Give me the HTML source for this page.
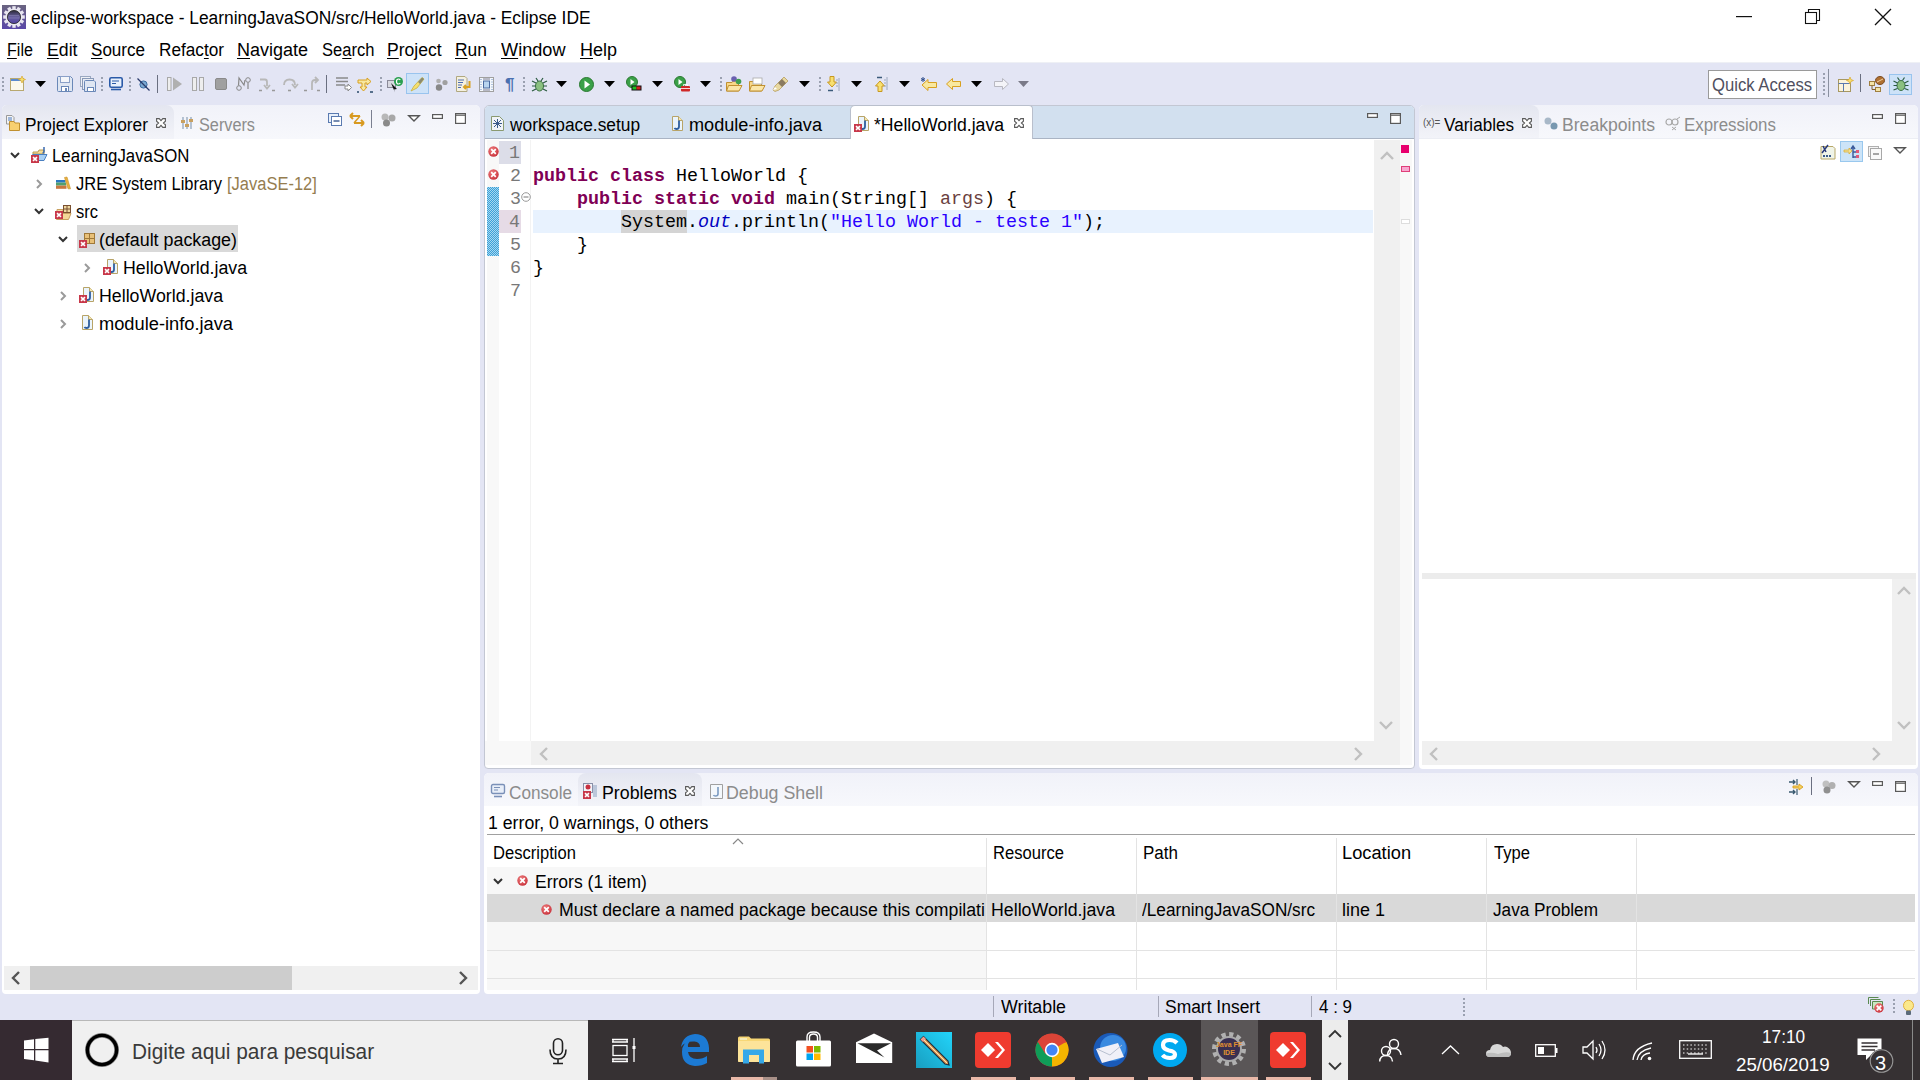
<!DOCTYPE html><html><head><meta charset="utf-8"><style>
*{margin:0;padding:0;box-sizing:border-box}
html,body{width:1920px;height:1080px;overflow:hidden}
body{position:relative;background:#e3e5f4;font-family:"Liberation Sans",sans-serif;color:#000}
.a{position:absolute}
.t{position:absolute;white-space:pre}
svg{position:absolute;overflow:visible}
</style></head><body>
<div class="a" style="left:0px;top:0px;width:1920px;height:62px;background:#fff"></div>
<div class="a" style="left:0px;top:62px;width:1920px;height:1px;background:#eef0f5"></div>
<div class="a" style="left:0px;top:63px;width:1920px;height:42px;background:#e3e5f4"></div>
<svg style="left:2px;top:5px" width="24" height="24" viewBox="0 0 24 24"><defs><linearGradient id="eb" x1="0" y1="0" x2="0" y2="1"><stop offset="0" stop-color="#6a6480"/><stop offset="1" stop-color="#5a48a8"/></linearGradient><linearGradient id="ec" x1="0" y1="0" x2="0" y2="1"><stop offset="0" stop-color="#2a2838"/><stop offset=".5" stop-color="#6a62a0"/><stop offset="1" stop-color="#5040a0"/></linearGradient></defs><rect width="24" height="24" fill="url(#eb)"/><g fill="#e8e6f0"><rect x="10.3" y="1.2" width="3.4" height="4" transform="rotate(0 12 12)"/><rect x="10.3" y="1.2" width="3.4" height="4" transform="rotate(30 12 12)"/><rect x="10.3" y="1.2" width="3.4" height="4" transform="rotate(60 12 12)"/><rect x="10.3" y="1.2" width="3.4" height="4" transform="rotate(90 12 12)"/><rect x="10.3" y="1.2" width="3.4" height="4" transform="rotate(120 12 12)"/><rect x="10.3" y="1.2" width="3.4" height="4" transform="rotate(150 12 12)"/><rect x="10.3" y="1.2" width="3.4" height="4" transform="rotate(180 12 12)"/><rect x="10.3" y="1.2" width="3.4" height="4" transform="rotate(210 12 12)"/><rect x="10.3" y="1.2" width="3.4" height="4" transform="rotate(240 12 12)"/><rect x="10.3" y="1.2" width="3.4" height="4" transform="rotate(270 12 12)"/><rect x="10.3" y="1.2" width="3.4" height="4" transform="rotate(300 12 12)"/><rect x="10.3" y="1.2" width="3.4" height="4" transform="rotate(330 12 12)"/></g><circle cx="12" cy="12" r="8.6" fill="#e8e6f0"/><circle cx="12" cy="12" r="6.6" fill="url(#ec)" stroke="#222" stroke-width=".8"/><path d="M7 10.5H17M6.5 13H17.5" stroke="#8a84b8" stroke-width=".8" opacity=".7"/></svg>
<div class="t" style="left:31.00px;top:6.76px;font-size:18.0px;line-height:22px;color:#000;font-family:'Liberation Sans',sans-serif;transform:scaleX(0.9649);transform-origin:0 0">eclipse-workspace - LearningJavaSON/src/HelloWorld.java - Eclipse IDE</div>
<svg style="left:1736px;top:16px" width="16" height="2"><rect width="16" height="1.2" fill="#111"/></svg>
<svg style="left:1805px;top:9px" width="16" height="16" viewBox="0 0 16 16"><path d="M3.5 3.5V0.5H14.5V11.5H11.5" fill="none" stroke="#111" stroke-width="1.1"/><rect x="0.5" y="3.5" width="11" height="11" fill="none" stroke="#111" stroke-width="1.1"/></svg>
<svg style="left:1874px;top:8px" width="18" height="18" viewBox="0 0 18 18"><path d="M1 1L17 17M17 1L1 17" stroke="#111" stroke-width="1.3"/></svg>
<div class="t" style="left:6.61px;top:38.76px;font-size:18.0px;line-height:22px;color:#000;font-family:'Liberation Sans',sans-serif;transform:scaleX(0.8931);transform-origin:0 0"><u style="text-underline-offset:2px">F</u>ile</div>
<div class="t" style="left:46.52px;top:38.76px;font-size:18.0px;line-height:22px;color:#000;font-family:'Liberation Sans',sans-serif;transform:scaleX(0.9828);transform-origin:0 0"><u style="text-underline-offset:2px">E</u>dit</div>
<div class="t" style="left:91.00px;top:38.76px;font-size:18.0px;line-height:22px;color:#000;font-family:'Liberation Sans',sans-serif;transform:scaleX(0.9470);transform-origin:0 0"><u style="text-underline-offset:2px">S</u>ource</div>
<div class="t" style="left:159.05px;top:38.76px;font-size:18.0px;line-height:22px;color:#000;font-family:'Liberation Sans',sans-serif;transform:scaleX(0.9548);transform-origin:0 0">Refac<u style="text-underline-offset:2px">t</u>or</div>
<div class="t" style="left:237.00px;top:38.76px;font-size:18.0px;line-height:22px;color:#000;font-family:'Liberation Sans',sans-serif;transform:scaleX(0.9996);transform-origin:0 0"><u style="text-underline-offset:2px">N</u>avigate</div>
<div class="t" style="left:322.00px;top:38.76px;font-size:18.0px;line-height:22px;color:#000;font-family:'Liberation Sans',sans-serif;transform:scaleX(0.9193);transform-origin:0 0">Se<u style="text-underline-offset:2px">a</u>rch</div>
<div class="t" style="left:387.02px;top:38.76px;font-size:18.0px;line-height:22px;color:#000;font-family:'Liberation Sans',sans-serif;transform:scaleX(0.9760);transform-origin:0 0"><u style="text-underline-offset:2px">P</u>roject</div>
<div class="t" style="left:455.03px;top:38.76px;font-size:18.0px;line-height:22px;color:#000;font-family:'Liberation Sans',sans-serif;transform:scaleX(0.9674);transform-origin:0 0"><u style="text-underline-offset:2px">R</u>un</div>
<div class="t" style="left:501.00px;top:38.76px;font-size:18.0px;line-height:22px;color:#000;font-family:'Liberation Sans',sans-serif;transform:scaleX(1.0074);transform-origin:0 0"><u style="text-underline-offset:2px">W</u>indow</div>
<div class="t" style="left:580.00px;top:38.76px;font-size:18.0px;line-height:22px;color:#000;font-family:'Liberation Sans',sans-serif;transform:scaleX(0.9998);transform-origin:0 0"><u style="text-underline-offset:2px">H</u>elp</div>
<div class="a" style="left:2px;top:105px;width:478px;height:889px;background:#fff;border-radius:5px 5px 4px 4px"></div>
<div class="a" style="left:2px;top:105px;width:478px;height:34px;background:linear-gradient(#f1f2f9,#f7f8fc);border-radius:5px 5px 0 0"></div>
<div class="a" style="left:2px;top:105px;width:172px;height:34px;background:linear-gradient(#e4e6f0,#f3f4f9);border-radius:5px 8px 0 0"></div>
<div class="t" style="left:25.04px;top:113.76px;font-size:18.0px;line-height:22px;color:#000;font-family:'Liberation Sans',sans-serif;transform:scaleX(0.9602);transform-origin:0 0">Project Explorer</div>
<div class="t" style="left:199.00px;top:113.76px;font-size:18.0px;line-height:22px;color:#8c8c8c;font-family:'Liberation Sans',sans-serif;transform:scaleX(0.9030);transform-origin:0 0">Servers</div>
<div class="a" style="left:484px;top:105px;width:931px;height:664px;background:#fff;border-radius:5px 5px 4px 4px;border:1px solid #c3c7d3"></div>
<div class="a" style="left:485px;top:106px;width:929px;height:33px;background:#d2e0ef;border-radius:4px 4px 0 0;border-bottom:1px solid #aab4c4"></div>
<div class="a" style="left:850px;top:105px;width:183px;height:34px;background:#fff;border:1px solid #b9bfcc;border-bottom:none;border-radius:5px 4px 0 0"></div>
<div class="t" style="left:509.96px;top:113.76px;font-size:18.0px;line-height:22px;color:#000;font-family:'Liberation Sans',sans-serif;transform:scaleX(0.9628);transform-origin:0 0">workspace.setup</div>
<div class="t" style="left:688.99px;top:113.76px;font-size:18.0px;line-height:22px;color:#000;font-family:'Liberation Sans',sans-serif;transform:scaleX(1.0071);transform-origin:0 0">module-info.java</div>
<div class="t" style="left:874.00px;top:113.76px;font-size:18.0px;line-height:22px;color:#000;font-family:'Liberation Sans',sans-serif;transform:scaleX(0.9797);transform-origin:0 0">*HelloWorld.java</div>
<div class="a" style="left:1419px;top:105px;width:499px;height:664px;background:#fff;border-radius:5px 5px 4px 4px"></div>
<div class="a" style="left:1419px;top:105px;width:499px;height:34px;background:linear-gradient(#f1f2f9,#f7f8fc);border-radius:5px 5px 0 0"></div>
<div class="a" style="left:1419px;top:105px;width:120px;height:34px;background:linear-gradient(#e4e6f0,#f3f4f9);border-radius:5px 8px 0 0"></div>
<div class="t" style="left:1444.00px;top:113.76px;font-size:18.0px;line-height:22px;color:#000;font-family:'Liberation Sans',sans-serif;transform:scaleX(0.9497);transform-origin:0 0">Variables</div>
<div class="t" style="left:1562.02px;top:113.76px;font-size:18.0px;line-height:22px;color:#8c8c8c;font-family:'Liberation Sans',sans-serif;transform:scaleX(0.9782);transform-origin:0 0">Breakpoints</div>
<div class="t" style="left:1684.06px;top:113.76px;font-size:18.0px;line-height:22px;color:#8c8c8c;font-family:'Liberation Sans',sans-serif;transform:scaleX(0.9377);transform-origin:0 0">Expressions</div>
<div class="a" style="left:484px;top:773px;width:1434px;height:221px;background:#fff;border-radius:5px 5px 4px 4px"></div>
<div class="a" style="left:484px;top:773px;width:1434px;height:33px;background:linear-gradient(#f1f2f9,#f7f8fc);border-radius:5px 5px 0 0"></div>
<div class="a" style="left:578px;top:773px;width:124px;height:33px;background:linear-gradient(#e4e6f0,#f3f4f9);border-radius:8px 8px 0 0"></div>
<div class="t" style="left:509.00px;top:781.76px;font-size:18.0px;line-height:22px;color:#8c8c8c;font-family:'Liberation Sans',sans-serif;transform:scaleX(0.9541);transform-origin:0 0">Console</div>
<div class="t" style="left:602.01px;top:781.76px;font-size:18.0px;line-height:22px;color:#000;font-family:'Liberation Sans',sans-serif;transform:scaleX(0.9863);transform-origin:0 0">Problems</div>
<div class="t" style="left:726.01px;top:781.76px;font-size:18.0px;line-height:22px;color:#8c8c8c;font-family:'Liberation Sans',sans-serif;transform:scaleX(0.9889);transform-origin:0 0">Debug Shell</div>
<div class="a" style="left:77px;top:225px;width:161px;height:27px;background:#d9d9d9"></div>
<div class="t" style="left:51.57px;top:144.76px;font-size:18.0px;line-height:22px;color:#000;font-family:'Liberation Sans',sans-serif;transform:scaleX(0.9339);transform-origin:0 0">LearningJavaSON</div>
<div class="t" style="left:76.00px;top:172.76px;font-size:18.0px;line-height:22px;color:#000;font-family:'Liberation Sans',sans-serif;transform:scaleX(0.9180);transform-origin:0 0">JRE System Library</div>
<div class="t" style="left:76.00px;top:200.76px;font-size:18.0px;line-height:22px;color:#000;font-family:'Liberation Sans',sans-serif;transform:scaleX(0.9169);transform-origin:0 0">src</div>
<div class="t" style="left:99.01px;top:228.76px;font-size:18.0px;line-height:22px;color:#000;font-family:'Liberation Sans',sans-serif;transform:scaleX(0.9920);transform-origin:0 0">(default package)</div>
<div class="t" style="left:123.01px;top:256.76px;font-size:18.0px;line-height:22px;color:#000;font-family:'Liberation Sans',sans-serif;transform:scaleX(0.9864);transform-origin:0 0">HelloWorld.java</div>
<div class="t" style="left:99.01px;top:284.76px;font-size:18.0px;line-height:22px;color:#000;font-family:'Liberation Sans',sans-serif;transform:scaleX(0.9864);transform-origin:0 0">HelloWorld.java</div>
<div class="t" style="left:98.99px;top:312.76px;font-size:18.0px;line-height:22px;color:#000;font-family:'Liberation Sans',sans-serif;transform:scaleX(1.0147);transform-origin:0 0">module-info.java</div>
<div class="t" style="left:227.08px;top:172.76px;font-size:18.0px;line-height:22px;color:#957d4f;font-family:'Liberation Sans',sans-serif;transform:scaleX(0.9162);transform-origin:0 0">[JavaSE-12]</div>
<div class="a" style="left:487px;top:140px;width:12px;height:601px;background:#f8f8f8"></div>
<div class="a" style="left:530px;top:140px;width:1px;height:601px;background:#f3f3f3"></div>
<div class="a" style="left:533px;top:210px;width:840px;height:23px;background:#e8f2fe"></div>
<div class="a" style="left:621px;top:210px;width:66px;height:23px;background:#d4d4d4"></div>
<div class="a" style="left:499px;top:141px;width:22px;height:23px;background:#dcdde8"></div>
<div class="a" style="left:499px;top:210px;width:22px;height:23px;background:#e6dbe6"></div>
<div class="t" style="left:509.00px;top:142.62px;font-size:18.33px;line-height:22px;color:#787878;font-family:'Liberation Mono',monospace">1</div>
<div class="t" style="left:510.00px;top:165.62px;font-size:18.33px;line-height:22px;color:#787878;font-family:'Liberation Mono',monospace">2</div>
<div class="t" style="left:510.00px;top:188.62px;font-size:18.33px;line-height:22px;color:#787878;font-family:'Liberation Mono',monospace">3</div>
<div class="t" style="left:509.00px;top:211.62px;font-size:18.33px;line-height:22px;color:#787878;font-family:'Liberation Mono',monospace">4</div>
<div class="t" style="left:510.00px;top:234.62px;font-size:18.33px;line-height:22px;color:#787878;font-family:'Liberation Mono',monospace">5</div>
<div class="t" style="left:510.00px;top:257.62px;font-size:18.33px;line-height:22px;color:#787878;font-family:'Liberation Mono',monospace">6</div>
<div class="t" style="left:510.00px;top:280.62px;font-size:18.33px;line-height:22px;color:#787878;font-family:'Liberation Mono',monospace">7</div>
<div class="t" style="left:533px;top:165.4px;font-family:'Liberation Mono',monospace;font-size:18.33px;line-height:23px"><span style="color:#7f0055;font-weight:bold">public</span> <span style="color:#7f0055;font-weight:bold">class</span> HelloWorld {</div>
<div class="t" style="left:533px;top:188.4px;font-family:'Liberation Mono',monospace;font-size:18.33px;line-height:23px">    <span style="color:#7f0055;font-weight:bold">public</span> <span style="color:#7f0055;font-weight:bold">static</span> <span style="color:#7f0055;font-weight:bold">void</span> main(String[] <span style="color:#6a3e3e">args</span>) {</div>
<div class="t" style="left:533px;top:211.4px;font-family:'Liberation Mono',monospace;font-size:18.33px;line-height:23px">        System.<span style="color:#0000c0;font-style:italic">out</span>.println(<span style="color:#2a00ff">"Hello World - teste 1"</span>);</div>
<div class="t" style="left:533px;top:234.4px;font-family:'Liberation Mono',monospace;font-size:18.33px;line-height:23px">    }</div>
<div class="t" style="left:533px;top:257.4px;font-family:'Liberation Mono',monospace;font-size:18.33px;line-height:23px">}</div>
<div class="a" style="left:1374px;top:140px;width:26px;height:625px;background:#f0f0f0"></div>
<div class="a" style="left:1400px;top:140px;width:12px;height:625px;background:#f8f8f8"></div>
<div class="a" style="left:531px;top:741px;width:843px;height:24px;background:#f0f0f0"></div>
<div class="a" style="left:485px;top:741px;width:46px;height:24px;background:#f8f8f8"></div>
<div class="t" style="left:487.62px;top:812.46px;font-size:18.0px;line-height:22px;color:#000;font-family:'Liberation Sans',sans-serif;transform:scaleX(0.9834);transform-origin:0 0">1 error, 0 warnings, 0 others</div>
<div class="a" style="left:487px;top:834px;width:1428px;height:1px;background:#a0a0a0"></div>
<div class="t" style="left:493.08px;top:841.76px;font-size:18.0px;line-height:22px;color:#000;font-family:'Liberation Sans',sans-serif;transform:scaleX(0.9202);transform-origin:0 0">Description</div>
<div class="t" style="left:992.78px;top:841.76px;font-size:18.0px;line-height:22px;color:#000;font-family:'Liberation Sans',sans-serif;transform:scaleX(0.9207);transform-origin:0 0">Resource</div>
<div class="t" style="left:1142.56px;top:841.76px;font-size:18.0px;line-height:22px;color:#000;font-family:'Liberation Sans',sans-serif;transform:scaleX(0.9424);transform-origin:0 0">Path</div>
<div class="t" style="left:1342.49px;top:841.76px;font-size:18.0px;line-height:22px;color:#000;font-family:'Liberation Sans',sans-serif;transform:scaleX(1.0145);transform-origin:0 0">Location</div>
<div class="t" style="left:1493.70px;top:841.76px;font-size:18.0px;line-height:22px;color:#000;font-family:'Liberation Sans',sans-serif;transform:scaleX(0.9228);transform-origin:0 0">Type</div>
<div class="a" style="left:487px;top:867px;width:499px;height:27px;background:#f7f7f7"></div>
<div class="a" style="left:487px;top:894px;width:1428px;height:28px;background:#d9d9d9"></div>
<div class="a" style="left:487px;top:922px;width:499px;height:68px;background:#f7f7f7"></div>
<div class="a" style="left:487px;top:950px;width:1428px;height:1px;background:#e3e3e3"></div>
<div class="a" style="left:487px;top:978px;width:1428px;height:1px;background:#e3e3e3"></div>
<div class="a" style="left:986px;top:838px;width:1px;height:152px;background:#e3e3e3"></div>
<div class="a" style="left:1136px;top:838px;width:1px;height:152px;background:#e3e3e3"></div>
<div class="a" style="left:1336px;top:838px;width:1px;height:152px;background:#e3e3e3"></div>
<div class="a" style="left:1486px;top:838px;width:1px;height:152px;background:#e3e3e3"></div>
<div class="a" style="left:1636px;top:838px;width:1px;height:152px;background:#e3e3e3"></div>
<div class="t" style="left:534.63px;top:870.76px;font-size:18.0px;line-height:22px;color:#000;font-family:'Liberation Sans',sans-serif;transform:scaleX(0.9734);transform-origin:0 0">Errors (1 item)</div>
<div class="t" style="left:559.02px;top:899.46px;font-size:18.0px;line-height:22px;color:#000;font-family:'Liberation Sans',sans-serif;transform:scaleX(0.9832);transform-origin:0 0">Must declare a named package because this compilati</div>
<div class="t" style="left:991.01px;top:899.46px;font-size:18.0px;line-height:22px;color:#000;font-family:'Liberation Sans',sans-serif;transform:scaleX(0.9864);transform-origin:0 0">HelloWorld.java</div>
<div class="t" style="left:1142.00px;top:899.46px;font-size:18.0px;line-height:22px;color:#000;font-family:'Liberation Sans',sans-serif;transform:scaleX(0.9554);transform-origin:0 0">/LearningJavaSON/src</div>
<div class="t" style="left:1341.50px;top:899.46px;font-size:18.0px;line-height:22px;color:#000;font-family:'Liberation Sans',sans-serif;transform:scaleX(0.9995);transform-origin:0 0">line 1</div>
<div class="t" style="left:1493.00px;top:899.46px;font-size:18.0px;line-height:22px;color:#000;font-family:'Liberation Sans',sans-serif;transform:scaleX(0.9537);transform-origin:0 0">Java Problem</div>
<div class="a" style="left:993px;top:996px;width:1px;height:21px;background:#a6a8b8"></div>
<div class="a" style="left:1158px;top:996px;width:1px;height:21px;background:#a6a8b8"></div>
<div class="a" style="left:1311px;top:996px;width:1px;height:21px;background:#a6a8b8"></div>
<div class="t" style="left:1001.40px;top:996.16px;font-size:18.0px;line-height:22px;color:#000;font-family:'Liberation Sans',sans-serif;transform:scaleX(0.9897);transform-origin:0 0">Writable</div>
<div class="t" style="left:1165.40px;top:996.16px;font-size:18.0px;line-height:22px;color:#000;font-family:'Liberation Sans',sans-serif;transform:scaleX(0.9692);transform-origin:0 0">Smart Insert</div>
<div class="t" style="left:1319.00px;top:996.16px;font-size:18.0px;line-height:22px;color:#000;font-family:'Liberation Sans',sans-serif;transform:scaleX(0.9425);transform-origin:0 0">4 : 9</div>
<svg style="left:10px;top:152px" width="10" height="7" viewBox="0 0 10 7"><path d="M1 1L5 5L9 1" fill="none" stroke="#333" stroke-width="2"/></svg>
<svg style="left:31px;top:147px" width="17" height="16" viewBox="0 0 17 16"><path d="M2 5H7L8 3H13V7H2Z" fill="#f4dc98" stroke="#b89a50"/><path d="M1.5 7.5H16L13 13.5H1.5Z" fill="#a8d0f4" stroke="#4a80c0"/><path d="M13 0V4.5Q13 6 11.5 6" fill="none" stroke="#3a6ab0" stroke-width="1.5"/><rect x="0" y="8" width="8" height="8" fill="#c8384a"/><path d="M2 10.2L6 13.8M6 10.2L2 13.8" stroke="#fff" stroke-width="1.6"/></svg>
<svg style="left:36px;top:179px" width="7" height="10" viewBox="0 0 7 10"><path d="M1 1L5 5L1 9" fill="none" stroke="#9a9a9a" stroke-width="2"/></svg>
<svg style="left:56px;top:177px" width="16" height="13" viewBox="0 0 16 13"><rect x="0" y="3" width="9.5" height="2.6" fill="#2a78c0"/><rect x="0" y="5.6" width="10" height="3" fill="#50a070"/><rect x="0" y="8.6" width="10.5" height="3.2" fill="#c87840"/><path d="M8.5 0.5L11 0L14.5 11.8H12Z" fill="#e8b040" stroke="#c89028" stroke-width=".6"/></svg>
<svg style="left:34px;top:208px" width="10" height="7" viewBox="0 0 10 7"><path d="M1 1L5 5L9 1" fill="none" stroke="#333" stroke-width="2"/></svg>
<svg style="left:55px;top:205px" width="16" height="15" viewBox="0 0 16 15"><path d="M2 4.5H8V9H2Z" fill="#f4dca8" stroke="#c8a060"/><path d="M1.5 8.5H16L13.5 14.5H1.5Z" fill="#f4d898" stroke="#c8a060"/><rect x="8.5" y="0.5" width="7" height="7" fill="#f0d8a0" stroke="#7a5030"/><path d="M12 0.5V7.5M8.5 4H15.5" stroke="#7a5030"/><rect x="0" y="6" width="8" height="8" fill="#c8384a"/><path d="M2 8.2L6 11.8M6 8.2L2 11.8" stroke="#fff" stroke-width="1.6"/></svg>
<svg style="left:58px;top:236px" width="10" height="7" viewBox="0 0 10 7"><path d="M1 1L5 5L9 1" fill="none" stroke="#333" stroke-width="2"/></svg>
<svg style="left:79px;top:233px" width="16" height="16" viewBox="0 0 16 16"><rect x="5.5" y="0.5" width="10" height="10" fill="#e8c078" stroke="#a07838"/><path d="M10.5 0.5V10.5M5.5 5.5H15.5" stroke="#a07838"/><rect x="0" y="7" width="8" height="8" fill="#c8384a"/><path d="M2 9.2L6 12.8M6 9.2L2 12.8" stroke="#fff" stroke-width="1.6"/></svg>
<svg style="left:84px;top:263px" width="7" height="10" viewBox="0 0 7 10"><path d="M1 1L5 5L1 9" fill="none" stroke="#9a9a9a" stroke-width="2"/></svg>
<svg style="left:103px;top:259px" width="16" height="16" viewBox="0 0 16 16"><path d="M4.5 0.5H10.5L14.5 4.5V14.5H4.5Z" fill="#eaf4fc" stroke="#b8a468"/><path d="M10.5 0.5V4.5H14.5" fill="#f4e6b0" stroke="#b8a468"/><path d="M11 4.5V10.5Q11 13 8.5 13Q7 13 6.5 12" fill="none" stroke="#2e5e9e" stroke-width="1.8"/><rect x="0" y="8" width="8" height="8" fill="#c8384a"/><path d="M2 10.2L6 13.8M6 10.2L2 13.8" stroke="#fff" stroke-width="1.6"/></svg>
<svg style="left:60px;top:291px" width="7" height="10" viewBox="0 0 7 10"><path d="M1 1L5 5L1 9" fill="none" stroke="#9a9a9a" stroke-width="2"/></svg>
<svg style="left:79px;top:287px" width="16" height="16" viewBox="0 0 16 16"><path d="M4.5 0.5H10.5L14.5 4.5V14.5H4.5Z" fill="#eaf4fc" stroke="#b8a468"/><path d="M10.5 0.5V4.5H14.5" fill="#f4e6b0" stroke="#b8a468"/><path d="M11 4.5V10.5Q11 13 8.5 13Q7 13 6.5 12" fill="none" stroke="#2e5e9e" stroke-width="1.8"/><rect x="0" y="8" width="8" height="8" fill="#c8384a"/><path d="M2 10.2L6 13.8M6 10.2L2 13.8" stroke="#fff" stroke-width="1.6"/></svg>
<svg style="left:60px;top:319px" width="7" height="10" viewBox="0 0 7 10"><path d="M1 1L5 5L1 9" fill="none" stroke="#9a9a9a" stroke-width="2"/></svg>
<svg style="left:78px;top:315px" width="16" height="16" viewBox="0 0 16 16"><path d="M4.5 0.5H10.5L14.5 4.5V14.5H4.5Z" fill="#eaf4fc" stroke="#b8a468"/><path d="M10.5 0.5V4.5H14.5" fill="#f4e6b0" stroke="#b8a468"/><path d="M11 4.5V10.5Q11 13 8.5 13Q7 13 6.5 12" fill="none" stroke="#2e5e9e" stroke-width="1.8"/></svg>
<svg style="left:6px;top:115px" width="14" height="16" viewBox="0 0 14 16"><path d="M0.5 0.5H6L8 2.5V9H0.5Z" fill="#f4f4f4" stroke="#999"/><path d="M2 3H6M2 5H6" stroke="#4a7ac0"/><path d="M3.5 6.5H8L9 8H13.5V15.5H3.5Z" fill="#f8d070" stroke="#c09030"/></svg>
<svg style="left:156px;top:118px" width="11" height="11" viewBox="0 0 11 11"><path d="M0.6 0.6H3.2L5 2.6L6.8 0.6H9.4V3.2L7.4 5L9.4 6.8V9.4H6.8L5 7.4L3.2 9.4H0.6V6.8L2.6 5L0.6 3.2Z" fill="#fff" stroke="#5a5a5a" stroke-width="1.1" stroke-linejoin="miter"/></svg>
<svg style="left:181px;top:117px" width="13" height="13" viewBox="0 0 13 13"><path d="M2 0V12M6 0V12M10 0V12" stroke="#8aa0b8" stroke-width="1.2"/><rect x="0" y="3" width="4" height="3" fill="#c8a060"/><rect x="4" y="7" width="4" height="3" fill="#c8a060"/><rect x="8" y="2" width="4" height="3" fill="#c8a060"/></svg>
<svg style="left:328px;top:113px" width="14" height="13" viewBox="0 0 14 13"><rect x="0.5" y="0.5" width="10" height="9" fill="#e8f0fa" stroke="#5a7ab0"/><rect x="3.5" y="3.5" width="10" height="9" fill="#fff" stroke="#5a7ab0"/><path d="M5.5 8H11.5" stroke="#3a5a90" stroke-width="1.4"/></svg>
<svg style="left:349px;top:112px" width="16" height="15" viewBox="0 0 16 15"><path d="M1 4H11M1 4L4 1M1 4L4 7" fill="none" stroke="#d89a20" stroke-width="2"/><path d="M15 11H5M15 11L12 8M15 11L12 14" fill="none" stroke="#d89a20" stroke-width="2"/><path d="M11 4L5 11" stroke="#d89a20" stroke-width="1.5"/></svg>
<div class="a" style="left:371px;top:110px;width:1px;height:18px;background:#7a7f90"></div>
<svg style="left:381px;top:113px" width="15" height="14" viewBox="0 0 15 14"><circle cx="4" cy="4" r="3.5" fill="#b8b8b8"/><circle cx="11" cy="5" r="3.5" fill="#a8a8a8"/><circle cx="5.5" cy="10" r="3.5" fill="#8a8a8a"/></svg>
<svg style="left:408px;top:115px" width="12" height="7" viewBox="0 0 12 7"><path d="M0.7 0.7H11.3L6 6Z" fill="#fff" stroke="#555" stroke-width="1.4"/></svg>
<svg style="left:432px;top:114px" width="11" height="5" viewBox="0 0 11 5"><rect x="0.6" y="0.6" width="9.8" height="3.8" fill="#fff" stroke="#5a5a5a" stroke-width="1.2"/></svg>
<svg style="left:455px;top:113px" width="11" height="11" viewBox="0 0 11 11"><rect x="0.6" y="0.6" width="9.8" height="9.8" fill="#fff" stroke="#5a5a5a" stroke-width="1.2"/><path d="M1 2.2H10" stroke="#5a5a5a" stroke-width="1.2"/></svg>
<svg style="left:491px;top:116px" width="13" height="15" viewBox="0 0 13 15"><path d="M0.5 0.5H8.5L12.5 4.5V14.5H0.5Z" fill="#f0f4f8" stroke="#8a9a70"/><path d="M3 4L10 11M10 4L3 11M6.5 3V12M2 7.5H11" stroke="#3a5a8a" stroke-width="1"/></svg>
<svg style="left:668px;top:116px" width="16" height="16" viewBox="0 0 16 16"><path d="M4.5 0.5H10.5L14.5 4.5V14.5H4.5Z" fill="#eaf4fc" stroke="#b8a468"/><path d="M10.5 0.5V4.5H14.5" fill="#f4e6b0" stroke="#b8a468"/><path d="M11 4.5V10.5Q11 13 8.5 13Q7 13 6.5 12" fill="none" stroke="#2e5e9e" stroke-width="1.8"/></svg>
<svg style="left:854px;top:116px" width="16" height="16" viewBox="0 0 16 16"><path d="M4.5 0.5H10.5L14.5 4.5V14.5H4.5Z" fill="#eaf4fc" stroke="#b8a468"/><path d="M10.5 0.5V4.5H14.5" fill="#f4e6b0" stroke="#b8a468"/><path d="M11 4.5V10.5Q11 13 8.5 13Q7 13 6.5 12" fill="none" stroke="#2e5e9e" stroke-width="1.8"/><rect x="0" y="8" width="8" height="8" fill="#c8384a"/><path d="M2 10.2L6 13.8M6 10.2L2 13.8" stroke="#fff" stroke-width="1.6"/></svg>
<svg style="left:1014px;top:118px" width="11" height="11" viewBox="0 0 11 11"><path d="M0.6 0.6H3.2L5 2.6L6.8 0.6H9.4V3.2L7.4 5L9.4 6.8V9.4H6.8L5 7.4L3.2 9.4H0.6V6.8L2.6 5L0.6 3.2Z" fill="#fff" stroke="#5a5a5a" stroke-width="1.1" stroke-linejoin="miter"/></svg>
<svg style="left:1367px;top:113px" width="11" height="5" viewBox="0 0 11 5"><rect x="0.6" y="0.6" width="9.8" height="3.8" fill="#fff" stroke="#5a5a5a" stroke-width="1.2"/></svg>
<svg style="left:1390px;top:113px" width="11" height="11" viewBox="0 0 11 11"><rect x="0.6" y="0.6" width="9.8" height="9.8" fill="#fff" stroke="#5a5a5a" stroke-width="1.2"/><path d="M1 2.2H10" stroke="#5a5a5a" stroke-width="1.2"/></svg>
<div class="t" style="left:1423.00px;top:115.69px;font-size:11px;line-height:13px;color:#555;font-family:'Liberation Sans',sans-serif;transform:scaleX(0.9030);transform-origin:0 0">(x)=</div>
<svg style="left:1522px;top:118px" width="11" height="11" viewBox="0 0 11 11"><path d="M0.6 0.6H3.2L5 2.6L6.8 0.6H9.4V3.2L7.4 5L9.4 6.8V9.4H6.8L5 7.4L3.2 9.4H0.6V6.8L2.6 5L0.6 3.2Z" fill="#fff" stroke="#5a5a5a" stroke-width="1.1" stroke-linejoin="miter"/></svg>
<svg style="left:1544px;top:117px" width="14" height="13" viewBox="0 0 14 13"><circle cx="4" cy="4" r="3.5" fill="#a8b8c8"/><circle cx="10" cy="9" r="3.5" fill="#7898b0"/></svg>
<svg style="left:1665px;top:117px" width="16" height="13" viewBox="0 0 16 13"><circle cx="4" cy="5" r="3" fill="none" stroke="#a8a8a8" stroke-width="1.2"/><circle cx="10" cy="5" r="3" fill="none" stroke="#a8a8a8" stroke-width="1.2"/><path d="M7 5H7.5M12 2L15 0" stroke="#a8a8a8"/><path d="M7 10L11 13M11 10L7 13" stroke="#a8a8a8"/></svg>
<svg style="left:1872px;top:114px" width="11" height="5" viewBox="0 0 11 5"><rect x="0.6" y="0.6" width="9.8" height="3.8" fill="#fff" stroke="#5a5a5a" stroke-width="1.2"/></svg>
<svg style="left:1895px;top:113px" width="11" height="11" viewBox="0 0 11 11"><rect x="0.6" y="0.6" width="9.8" height="9.8" fill="#fff" stroke="#5a5a5a" stroke-width="1.2"/><path d="M1 2.2H10" stroke="#5a5a5a" stroke-width="1.2"/></svg>
<div class="a" style="left:1419px;top:138px;width:499px;height:1px;background:#eceef4"></div>
<svg style="left:1820px;top:145px" width="16" height="15" viewBox="0 0 16 15"><path d="M1 1.5H13L15 3.5V14H1Z" fill="#f0f4e8" stroke="#b8a868"/><path d="M3 11H5M6 11H8M9 11H11" stroke="#3a5a8a" stroke-width="2"/><path d="M2 8L8 0M3 1L6 7" stroke="#2a3a7a" stroke-width="1.5"/></svg>
<div class="a" style="left:1840px;top:141px;width:23px;height:21px;background:#cce4f8;border:1px solid #99c8ee"></div>
<svg style="left:1844px;top:145px" width="16" height="13" viewBox="0 0 16 13"><path d="M0 5H5V3L8 6L5 9V7H0Z" fill="#f4e090" stroke="#d8b040" stroke-width=".8"/><path d="M9 13V2M7 4L9 1L11 4M9 12H13M9 7H13" fill="none" stroke="#3a5a9a" stroke-width="1.4"/><rect x="12" y="5" width="3" height="3" fill="#e05a7a"/><rect x="12" y="10" width="3" height="3" fill="#e05a7a"/></svg>
<svg style="left:1868px;top:146px" width="14" height="14" viewBox="0 0 14 14"><rect x="0.5" y="0.5" width="10" height="10" fill="#f4f4f4" stroke="#b0b0b0"/><rect x="2.5" y="2.5" width="11" height="11" fill="#fafafa" stroke="#a8a8a8"/><path d="M5 8H11" stroke="#888" stroke-width="1.5"/></svg>
<svg style="left:1894px;top:147px" width="12" height="7" viewBox="0 0 12 7"><path d="M0.7 0.7H11.3L6 6Z" fill="#fff" stroke="#555" stroke-width="1.4"/></svg>
<div class="a" style="left:1422px;top:573px;width:494px;height:6px;background:#ececec"></div>
<div class="a" style="left:1892px;top:579px;width:24px;height:162px;background:#f0f0f0"></div>
<div class="a" style="left:1422px;top:741px;width:494px;height:24px;background:#f0f0f0"></div>
<svg style="left:491px;top:784px" width="14" height="14" viewBox="0 0 14 14"><rect x="0.5" y="0.5" width="13" height="9" rx="1.5" fill="#e8eef8" stroke="#7a90b8" stroke-width="1.4"/><path d="M3 3.5H9M3 6H7" stroke="#7a90b8"/><path d="M3 12.5H11" stroke="#7a90b8" stroke-width="1.6"/></svg>
<svg style="left:583px;top:783px" width="15" height="16" viewBox="0 0 15 16"><rect x="0.5" y="0.5" width="9" height="9" fill="#f4f4f8" stroke="#8a90a8"/><circle cx="5" cy="4" r="2.5" fill="#c83040"/><path d="M11 2V14M13 2V14" stroke="#8aa0c0"/><rect x="0" y="8" width="8" height="8" fill="#c8384a"/><path d="M2 10.2L6 13.8M6 10.2L2 13.8" stroke="#fff" stroke-width="1.6"/></svg>
<svg style="left:685px;top:786px" width="11" height="11" viewBox="0 0 11 11"><path d="M0.6 0.6H3.2L5 2.6L6.8 0.6H9.4V3.2L7.4 5L9.4 6.8V9.4H6.8L5 7.4L3.2 9.4H0.6V6.8L2.6 5L0.6 3.2Z" fill="#fff" stroke="#5a5a5a" stroke-width="1.1" stroke-linejoin="miter"/></svg>
<svg style="left:710px;top:783px" width="13" height="16" viewBox="0 0 13 16"><path d="M0.5 1.5H12.5V15.5H0.5Z" fill="#f4f8fc" stroke="#a0a0a0"/><path d="M8 4V11Q8 13 5.5 13Q4 13 3.5 12" fill="none" stroke="#7a9ac0" stroke-width="1.6"/></svg>
<svg style="left:1789px;top:779px" width="17" height="16" viewBox="0 0 17 16"><path d="M0 3H6M4 1L6 3L4 5M0 13H6M4 11L6 13L4 15" fill="none" stroke="#3a5a70" stroke-width="1.4"/><path d="M8 0V6M8 10V16" stroke="#3a5a70" stroke-width="1.2"/><path d="M4 7H10V5L14 8L10 11V9H4Z" fill="#f4d060" stroke="#d8a020" stroke-width=".9"/></svg>
<div class="a" style="left:1811px;top:777px;width:1px;height:18px;background:#6a6f80"></div>
<svg style="left:1822px;top:780px" width="14" height="14" viewBox="0 0 14 14"><circle cx="4" cy="4" r="3.5" fill="#c0c0c0"/><circle cx="10" cy="5.5" r="3.5" fill="#b0b0b0"/><circle cx="5" cy="10" r="3.5" fill="#909090"/></svg>
<svg style="left:1848px;top:781px" width="12" height="7" viewBox="0 0 12 7"><path d="M0.7 0.7H11.3L6 6Z" fill="#fff" stroke="#555" stroke-width="1.4"/></svg>
<svg style="left:1872px;top:781px" width="11" height="5" viewBox="0 0 11 5"><rect x="0.6" y="0.6" width="9.8" height="3.8" fill="#fff" stroke="#5a5a5a" stroke-width="1.2"/></svg>
<svg style="left:1895px;top:781px" width="11" height="11" viewBox="0 0 11 11"><rect x="0.6" y="0.6" width="9.8" height="9.8" fill="#fff" stroke="#5a5a5a" stroke-width="1.2"/><path d="M1 2.2H10" stroke="#5a5a5a" stroke-width="1.2"/></svg>
<svg style="left:488px;top:146px" width="11.0" height="11.0" viewBox="0 0 11.0 11.0"><defs><radialGradient id="eg" cx=".4" cy=".35" r=".7"><stop offset="0" stop-color="#f08080"/><stop offset="1" stop-color="#c8303a"/></radialGradient></defs><circle cx="5.5" cy="5.5" r="5.2" fill="url(#eg)"/><path d="M3.2 3.2L7.8 7.8M7.8 3.2L3.2 7.8" stroke="#fff" stroke-width="1.7"/></svg>
<svg style="left:488px;top:169px" width="11.0" height="11.0" viewBox="0 0 11.0 11.0"><defs><radialGradient id="eg" cx=".4" cy=".35" r=".7"><stop offset="0" stop-color="#f08080"/><stop offset="1" stop-color="#c8303a"/></radialGradient></defs><circle cx="5.5" cy="5.5" r="5.2" fill="url(#eg)"/><path d="M3.2 3.2L7.8 7.8M7.8 3.2L3.2 7.8" stroke="#fff" stroke-width="1.7"/></svg>
<svg style="left:487px;top:187px" width="12" height="69" viewBox="0 0 12 69"><defs><pattern id="qd" width="2" height="2" patternUnits="userSpaceOnUse"><rect width="2" height="2" fill="#3ca0d8"/><rect width="1" height="1" fill="#a8d8f0"/><rect x="1" y="1" width="1" height="1" fill="#a8d8f0"/></pattern></defs><rect width="12" height="69" fill="url(#qd)"/></svg>
<svg style="left:521px;top:192px" width="10" height="10" viewBox="0 0 10 10"><circle cx="5" cy="5" r="4.3" fill="#fff" stroke="#9a9a9a"/><path d="M2.5 5H7.5" stroke="#777"/></svg>
<svg style="left:1380px;top:151px" width="14" height="9" viewBox="0 0 14 9"><path d="M1 8L7 2L13 8" fill="none" stroke="#c0c0c0" stroke-width="2.4"/></svg>
<svg style="left:1379px;top:721px" width="14" height="9" viewBox="0 0 14 9"><path d="M1 1L7 7L13 1" fill="none" stroke="#c0c0c0" stroke-width="2.4"/></svg>
<svg style="left:539px;top:747px" width="9" height="14" viewBox="0 0 9 14"><path d="M8 1L2 7L8 13" fill="none" stroke="#c0c0c0" stroke-width="2.4"/></svg>
<svg style="left:1354px;top:747px" width="9" height="14" viewBox="0 0 9 14"><path d="M1 1L7 7L1 13" fill="none" stroke="#c0c0c0" stroke-width="2.4"/></svg>
<div class="a" style="left:1401px;top:145px;width:8px;height:8px;background:#e8006e"></div>
<div class="a" style="left:1401px;top:166px;width:9px;height:6px;background:#f8a8d0;border:1px solid #e0407a"></div>
<div class="a" style="left:1401px;top:219px;width:9px;height:5px;background:#fff;border:1px solid #ddd"></div>
<svg style="left:1897px;top:586px" width="14" height="9" viewBox="0 0 14 9"><path d="M1 8L7 2L13 8" fill="none" stroke="#c0c0c0" stroke-width="2.4"/></svg>
<svg style="left:1897px;top:721px" width="14" height="9" viewBox="0 0 14 9"><path d="M1 1L7 7L13 1" fill="none" stroke="#c0c0c0" stroke-width="2.4"/></svg>
<svg style="left:1429px;top:747px" width="9" height="14" viewBox="0 0 9 14"><path d="M8 1L2 7L8 13" fill="none" stroke="#c0c0c0" stroke-width="2.4"/></svg>
<svg style="left:1872px;top:747px" width="9" height="14" viewBox="0 0 9 14"><path d="M1 1L7 7L1 13" fill="none" stroke="#c0c0c0" stroke-width="2.4"/></svg>
<div class="a" style="left:4px;top:966px;width:474px;height:24px;background:#f0f0f0"></div>
<div class="a" style="left:30px;top:966px;width:262px;height:24px;background:#cdcdcd"></div>
<svg style="left:11px;top:971px" width="9" height="14" viewBox="0 0 9 14"><path d="M8 1L2 7L8 13" fill="none" stroke="#555" stroke-width="2.4"/></svg>
<svg style="left:459px;top:971px" width="9" height="14" viewBox="0 0 9 14"><path d="M1 1L7 7L1 13" fill="none" stroke="#555" stroke-width="2.4"/></svg>
<svg style="left:493px;top:878px" width="10" height="7" viewBox="0 0 10 7"><path d="M1 1L5 5L9 1" fill="none" stroke="#333" stroke-width="2"/></svg>
<svg style="left:517px;top:875px" width="11.0" height="11.0" viewBox="0 0 11.0 11.0"><defs><radialGradient id="eg" cx=".4" cy=".35" r=".7"><stop offset="0" stop-color="#f08080"/><stop offset="1" stop-color="#c8303a"/></radialGradient></defs><circle cx="5.5" cy="5.5" r="5.2" fill="url(#eg)"/><path d="M3.2 3.2L7.8 7.8M7.8 3.2L3.2 7.8" stroke="#fff" stroke-width="1.7"/></svg>
<svg style="left:541px;top:904px" width="11.0" height="11.0" viewBox="0 0 11.0 11.0"><defs><radialGradient id="eg" cx=".4" cy=".35" r=".7"><stop offset="0" stop-color="#f08080"/><stop offset="1" stop-color="#c8303a"/></radialGradient></defs><circle cx="5.5" cy="5.5" r="5.2" fill="url(#eg)"/><path d="M3.2 3.2L7.8 7.8M7.8 3.2L3.2 7.8" stroke="#fff" stroke-width="1.7"/></svg>
<svg style="left:732px;top:838px" width="12" height="7" viewBox="0 0 12 7"><path d="M1 6L6 1L11 6" fill="none" stroke="#888" stroke-width="1.2"/></svg>
<svg style="left:1463px;top:998px" width="2" height="16" viewBox="0 0 2 16"><rect x="0" y="0" width="2" height="2" fill="#9aa0b0"/><rect x="0" y="4" width="2" height="2" fill="#9aa0b0"/><rect x="0" y="8" width="2" height="2" fill="#9aa0b0"/><rect x="0" y="12" width="2" height="2" fill="#9aa0b0"/><rect x="0" y="16" width="2" height="2" fill="#9aa0b0"/></svg>
<svg style="left:1868px;top:997px" width="16" height="17" viewBox="0 0 16 17"><path d="M0.5 7V0.5H10.5M2.5 9V2.5H12.5" fill="none" stroke="#5a8a50"/><path d="M4.5 4.5H14.5V12H4.5Z" fill="#c8e8c0" stroke="#5a8a50"/></svg>
<svg style="left:1874px;top:1003px" width="10" height="10" viewBox="0 0 10 10"><defs><radialGradient id="eg" cx=".4" cy=".35" r=".7"><stop offset="0" stop-color="#f08080"/><stop offset="1" stop-color="#c8303a"/></radialGradient></defs><circle cx="5" cy="5" r="4.7" fill="url(#eg)"/><path d="M2.7 2.7L7.3 7.3M7.3 2.7L2.7 7.3" stroke="#fff" stroke-width="1.7"/></svg>
<svg style="left:1893px;top:999px" width="2" height="15" viewBox="0 0 2 15"><rect x="0" y="0" width="2" height="2" fill="#9aa0b0"/><rect x="0" y="4" width="2" height="2" fill="#9aa0b0"/><rect x="0" y="8" width="2" height="2" fill="#9aa0b0"/><rect x="0" y="12" width="2" height="2" fill="#9aa0b0"/></svg>
<svg style="left:1903px;top:1000px" width="11" height="16" viewBox="0 0 11 16"><ellipse cx="5.5" cy="5.5" rx="5" ry="5.2" fill="#fbe88a" stroke="#e0b040"/><rect x="3" y="10.5" width="5" height="4.5" rx="1" fill="#5a6a7a"/></svg>
<svg style="left:2px;top:77px" width="2" height="14" viewBox="0 0 2 14"><rect x="0" y="0" width="2" height="2" fill="#9aa0b0"/><rect x="0" y="4" width="2" height="2" fill="#9aa0b0"/><rect x="0" y="8" width="2" height="2" fill="#9aa0b0"/><rect x="0" y="12" width="2" height="2" fill="#9aa0b0"/></svg>
<svg style="left:101px;top:77px" width="2" height="14" viewBox="0 0 2 14"><rect x="0" y="0" width="2" height="2" fill="#9aa0b0"/><rect x="0" y="4" width="2" height="2" fill="#9aa0b0"/><rect x="0" y="8" width="2" height="2" fill="#9aa0b0"/><rect x="0" y="12" width="2" height="2" fill="#9aa0b0"/></svg>
<svg style="left:129px;top:77px" width="2" height="14" viewBox="0 0 2 14"><rect x="0" y="0" width="2" height="2" fill="#9aa0b0"/><rect x="0" y="4" width="2" height="2" fill="#9aa0b0"/><rect x="0" y="8" width="2" height="2" fill="#9aa0b0"/><rect x="0" y="12" width="2" height="2" fill="#9aa0b0"/></svg>
<svg style="left:380px;top:77px" width="2" height="14" viewBox="0 0 2 14"><rect x="0" y="0" width="2" height="2" fill="#9aa0b0"/><rect x="0" y="4" width="2" height="2" fill="#9aa0b0"/><rect x="0" y="8" width="2" height="2" fill="#9aa0b0"/><rect x="0" y="12" width="2" height="2" fill="#9aa0b0"/></svg>
<svg style="left:523px;top:77px" width="2" height="14" viewBox="0 0 2 14"><rect x="0" y="0" width="2" height="2" fill="#9aa0b0"/><rect x="0" y="4" width="2" height="2" fill="#9aa0b0"/><rect x="0" y="8" width="2" height="2" fill="#9aa0b0"/><rect x="0" y="12" width="2" height="2" fill="#9aa0b0"/></svg>
<svg style="left:720px;top:77px" width="2" height="14" viewBox="0 0 2 14"><rect x="0" y="0" width="2" height="2" fill="#9aa0b0"/><rect x="0" y="4" width="2" height="2" fill="#9aa0b0"/><rect x="0" y="8" width="2" height="2" fill="#9aa0b0"/><rect x="0" y="12" width="2" height="2" fill="#9aa0b0"/></svg>
<svg style="left:819px;top:77px" width="2" height="14" viewBox="0 0 2 14"><rect x="0" y="0" width="2" height="2" fill="#9aa0b0"/><rect x="0" y="4" width="2" height="2" fill="#9aa0b0"/><rect x="0" y="8" width="2" height="2" fill="#9aa0b0"/><rect x="0" y="12" width="2" height="2" fill="#9aa0b0"/></svg>
<svg style="left:35px;top:81px" width="11" height="6" viewBox="0 0 11 6"><path d="M0 0H11L5.5 6Z" fill="#000"/></svg>
<svg style="left:556px;top:81px" width="11" height="6" viewBox="0 0 11 6"><path d="M0 0H11L5.5 6Z" fill="#000"/></svg>
<svg style="left:604px;top:81px" width="11" height="6" viewBox="0 0 11 6"><path d="M0 0H11L5.5 6Z" fill="#000"/></svg>
<svg style="left:652px;top:81px" width="11" height="6" viewBox="0 0 11 6"><path d="M0 0H11L5.5 6Z" fill="#000"/></svg>
<svg style="left:700px;top:81px" width="11" height="6" viewBox="0 0 11 6"><path d="M0 0H11L5.5 6Z" fill="#000"/></svg>
<svg style="left:799px;top:81px" width="11" height="6" viewBox="0 0 11 6"><path d="M0 0H11L5.5 6Z" fill="#000"/></svg>
<svg style="left:851px;top:81px" width="11" height="6" viewBox="0 0 11 6"><path d="M0 0H11L5.5 6Z" fill="#000"/></svg>
<svg style="left:899px;top:81px" width="11" height="6" viewBox="0 0 11 6"><path d="M0 0H11L5.5 6Z" fill="#000"/></svg>
<svg style="left:971px;top:81px" width="11" height="6" viewBox="0 0 11 6"><path d="M0 0H11L5.5 6Z" fill="#000"/></svg>
<svg style="left:1018px;top:81px" width="11" height="6" viewBox="0 0 11 6"><path d="M0 0H11L5.5 6Z" fill="#7a7a88"/></svg>
<div class="a" style="left:157px;top:75px;width:1px;height:18px;background:#6a6f80"></div>
<div class="a" style="left:326px;top:75px;width:1px;height:18px;background:#6a6f80"></div>
<svg style="left:10px;top:76px" width="16" height="16" viewBox="0 0 16 16"><rect x="0.5" y="2.5" width="13" height="12" fill="#fbf8ec" stroke="#b8a870"/><rect x="1" y="3" width="12" height="2" fill="#5a8ad0"/><path d="M12 0L13 2.5L15.5 3.5L13 4.5L12 7L11 4.5L8.5 3.5L11 2.5Z" fill="#f8e070" stroke="#d8a830" stroke-width=".7"/></svg>
<svg style="left:57px;top:76px" width="16" height="16" viewBox="0 0 16 16"><path d="M0.5 1.5Q0.5 0.5 1.5 0.5H13.5L15.5 2.5V14.5Q15.5 15.5 14.5 15.5H1.5Q0.5 15.5 0.5 14.5Z" fill="#dfe6f2" stroke="#6a88b8"/><rect x="3.5" y="0.5" width="9" height="6" fill="#f4f6fa" stroke="#8aa0c8"/><rect x="4.5" y="10.5" width="7" height="5" fill="#fff" stroke="#6a88b8"/><rect x="8" y="12" width="2" height="3" fill="#6a88b8"/></svg>
<svg style="left:80px;top:76px" width="16" height="16" viewBox="0 0 16 16"><rect x="0.5" y="0.5" width="10" height="10" fill="#eef0f6" stroke="#9aa8c0"/><rect x="2.5" y="2.5" width="11" height="11" fill="#e8ecf4" stroke="#8a9ab8"/><path d="M4.5 5.5Q4.5 4.5 5.5 4.5H14L15.5 6V15.5H4.5Z" fill="#dfe6f2" stroke="#6a88b8"/><rect x="7.5" y="11.5" width="6" height="4" fill="#fff" stroke="#6a88b8"/></svg>
<svg style="left:109px;top:77px" width="14" height="14" viewBox="0 0 14 14"><rect x="0.8" y="0.8" width="12.4" height="9.4" rx="1.5" fill="#e8f0fc" stroke="#2a5aa8" stroke-width="1.6"/><path d="M3 4H10M3 6.5H7" stroke="#2a5aa8" stroke-width="1.1"/><path d="M2 12.5H12" stroke="#2a5aa8" stroke-width="1.6"/></svg>
<svg style="left:137px;top:78px" width="13" height="13" viewBox="0 0 13 13"><circle cx="6.5" cy="6.5" r="3.6" fill="#7aa8d0" stroke="#3a6aa0"/><path d="M0.5 0.5L12.5 12.5" stroke="#2a3a6a" stroke-width="1.2"/></svg>
<svg style="left:167px;top:77px" width="16" height="14" viewBox="0 0 16 14"><rect x="0.5" y="0.5" width="3.5" height="13" fill="#eee" stroke="#a8a8a8"/><path d="M6 0.5L15 7L6 13.5Z" fill="#b0b0b0"/></svg>
<svg style="left:192px;top:77px" width="12" height="14" viewBox="0 0 12 14"><rect x="0.5" y="0.5" width="4" height="13" fill="#eee" stroke="#a8a8a8"/><rect x="7.5" y="0.5" width="4" height="13" fill="#eee" stroke="#a8a8a8"/></svg>
<svg style="left:215px;top:78px" width="12" height="12" viewBox="0 0 12 12"><rect x="0.5" y="0.5" width="11" height="11" rx="1.5" fill="#a0a0a0" stroke="#8a8a8a"/></svg>
<svg style="left:236px;top:77px" width="15" height="14" viewBox="0 0 15 14"><circle cx="3" cy="11" r="2.3" fill="none" stroke="#888"/><circle cx="12" cy="3" r="2.3" fill="none" stroke="#888"/><path d="M2.5 8.5L3 1L8 8L9 3M12 5.5V12" fill="none" stroke="#888" stroke-width="1.2"/></svg>
<svg style="left:259px;top:78px" width="16" height="13" viewBox="0 0 16 13"><path d="M1 1.5H6Q8 1.5 8 4V8" fill="none" stroke="#b8b8b8" stroke-width="1.8"/><path d="M5 7L8 10.5L11 7" fill="none" stroke="#b8b8b8" stroke-width="1.8"/><path d="M0 12.5H3M13 12.5H16" stroke="#999" stroke-width="1.6"/></svg>
<svg style="left:282px;top:78px" width="16" height="13" viewBox="0 0 16 13"><path d="M2 7Q2 1.5 7.5 1.5Q13 1.5 13 7" fill="none" stroke="#b8b8b8" stroke-width="1.8"/><path d="M10 6L13 9.5L16 6" fill="none" stroke="#b8b8b8" stroke-width="1.8"/><path d="M6 12.5H9" stroke="#999" stroke-width="1.6"/></svg>
<svg style="left:304px;top:78px" width="16" height="13" viewBox="0 0 16 13"><path d="M8 12V5Q8 2 11 2H13" fill="none" stroke="#b8b8b8" stroke-width="1.8"/><path d="M11 -1L14 2L11 5" fill="none" stroke="#b8b8b8" stroke-width="1.8"/><path d="M0 12.5H3M13 12.5H16" stroke="#999" stroke-width="1.6"/></svg>
<svg style="left:336px;top:77px" width="16" height="16" viewBox="0 0 16 16"><path d="M0 1H12M0 4.5H12M0 8H9" stroke="#8a8a8a" stroke-width="1.6"/><path d="M9 9H12V7L15.5 10.5L12 14V12H9Z" fill="#fff" stroke="#8a8a8a"/></svg>
<svg style="left:357px;top:77px" width="16" height="16" viewBox="0 0 16 16"><path d="M1 3H10V1L14 4.5L10 8V6H8V10H10L6.5 14L3 10H5V6H1Z" fill="#f8e8a0" stroke="#d8a020"/><path d="M0 15H2M13 15H16" stroke="#2a4a6a" stroke-width="1.5"/></svg>
<svg style="left:387px;top:77px" width="16" height="16" viewBox="0 0 16 16"><rect x="0.5" y="3.5" width="8" height="7" fill="#d8d8e0" stroke="#8a8a98"/><path d="M4 6L10 12L7 12.5L8 15.5Z" fill="#111"/><circle cx="11.5" cy="4.5" r="4.5" fill="#2aa050"/><path d="M13.3 3Q12.5 2 11.5 2Q9.5 2 9.5 4.5Q9.5 7 11.5 7Q12.5 7 13.3 6" fill="none" stroke="#fff" stroke-width="1.2"/></svg>
<div class="a" style="left:406px;top:73px;width:23px;height:21px;background:#cde2f8;border:1px solid #99c4ee"></div>
<svg style="left:409px;top:76px" width="16" height="16" viewBox="0 0 16 16"><path d="M2 15L5 10L13 1.5L15 3L8 12Z" fill="#f4e070" stroke="#c8b040" stroke-width=".8"/><path d="M9 6L13 1.5L15 3L11 8Z" fill="#8a8a70"/></svg>
<svg style="left:435px;top:78px" width="13" height="13" viewBox="0 0 13 13"><circle cx="3.5" cy="3" r="2.3" fill="#b0b0b0"/><circle cx="10" cy="4.5" r="2.6" fill="#a0a0a0"/><circle cx="4" cy="9.5" r="3.2" fill="#888"/></svg>
<svg style="left:456px;top:76px" width="16" height="16" viewBox="0 0 16 16"><path d="M0.5 0.5H9L11 2.5V15.5H0.5Z" fill="#f4f0e0" stroke="#b0a880"/><path d="M2 4H8M2 6.5H7M2 9H6M2 11.5H5" stroke="#4a6ab0"/><path d="M13.5 5V11H8M10 9L8 11L10 13" fill="none" stroke="#d8a020" stroke-width="2"/></svg>
<svg style="left:479px;top:77px" width="15" height="15" viewBox="0 0 15 15"><rect x="0.5" y="0.5" width="14" height="14" fill="#f4f8fc" stroke="#a0a0a0"/><path d="M2 2V13M13 2V13" stroke="#6a8ac0" stroke-dasharray="1 1.5"/><rect x="4.5" y="4" width="6" height="7" fill="#b8d4f0" stroke="#4a6aa0"/><path d="M4 2H11M4 13H11" stroke="#7a7a90"/></svg>
<div class="t" style="left:505.00px;top:75.11px;font-size:17px;line-height:20px;color:#4a70b0;font-family:'Liberation Sans',sans-serif;font-weight:bold">¶</div>
<svg style="left:531px;top:77px" width="16" height="16" viewBox="0 0 16 16"><ellipse cx="8.5" cy="9" rx="4" ry="5" fill="#8ac080" stroke="#3a7040"/><path d="M1 4L5 6M1 9H4.5M1 14L5 12M16 4L12 6M16 9H12.5M16 14L12 12M5 1L7 4M12 1L10 4" stroke="#2a5a40" stroke-width="1.2"/></svg>
<svg style="left:579px;top:77px" width="15" height="15" viewBox="0 0 15 15"><circle cx="7.5" cy="7.5" r="7" fill="#3aa048" stroke="#2a7a30"/><path d="M5.5 3.5L11 7.5L5.5 11.5Z" fill="#fff"/></svg>
<svg style="left:626px;top:76px" width="16" height="16" viewBox="0 0 16 16"><circle cx="6" cy="6" r="5.5" fill="#3aa048" stroke="#2a7a30"/><path d="M4.5 3L8.5 6L4.5 9Z" fill="#fff"/><rect x="5.5" y="9.5" width="10" height="5" fill="#111"/><rect x="6.5" y="10.5" width="4" height="3" fill="#20c020"/><rect x="10.5" y="10.5" width="4" height="3" fill="#d02020"/></svg>
<svg style="left:674px;top:76px" width="16" height="16" viewBox="0 0 16 16"><circle cx="6" cy="6" r="5.5" fill="#3aa048" stroke="#2a7a30"/><path d="M4.5 3L8.5 6L4.5 9Z" fill="#fff"/><rect x="7" y="10" width="9" height="5.5" rx="1" fill="#d02828"/><path d="M9.5 10V8.5H13.5V10M7 12.5H16" fill="none" stroke="#fff" stroke-width=".8"/></svg>
<svg style="left:726px;top:76px" width="17" height="16" viewBox="0 0 17 16"><path d="M0.5 6.5H6L7 5H12.5V15H0.5Z" fill="#f8d888" stroke="#c09030"/><path d="M2.5 9.5H16L13 15H0.5Z" fill="#fbe6a8" stroke="#c09030"/><circle cx="8" cy="3" r="2.8" fill="#6a60b0"/><circle cx="12.5" cy="5.5" r="2.8" fill="#40a050"/></svg>
<svg style="left:749px;top:77px" width="17" height="15" viewBox="0 0 17 15"><path d="M0.5 4.5H6L7 3H12.5V14H0.5Z" fill="#f8d888" stroke="#c09030"/><rect x="4" y="1" width="9" height="6" fill="#fff" stroke="#aaa" stroke-width=".8"/><path d="M2.5 8.5H16L13 14H0.5Z" fill="#fbe6a8" stroke="#c09030"/></svg>
<svg style="left:772px;top:76px" width="17" height="16" viewBox="0 0 17 16"><path d="M1 14L3 10L12 1L16 5L7 14L3 15.5Z" fill="#e8d8a0" stroke="#b8a060" stroke-width=".8"/><path d="M6 7L10 3L14 7L10 11Z" fill="#8a7a60"/><path d="M1 14L3 11L5 13Z" fill="#fff"/></svg>
<svg style="left:827px;top:76px" width="16" height="16" viewBox="0 0 16 16"><path d="M3 0.5H7V6H9.5L5 11L0.5 6H3Z" fill="#f8e070" stroke="#c89820"/><path d="M1 14.5H6" stroke="#3a5a7a" stroke-width="1.5"/><path d="M12 2V15M9 4H11M9 7H11M9 10H11" stroke="#8a9ab0" stroke-width=".8"/></svg>
<svg style="left:875px;top:76px" width="16" height="16" viewBox="0 0 16 16"><path d="M3 15.5H7V10H9.5L5 5L0.5 10H3Z" fill="#f8e070" stroke="#c89820"/><path d="M2 1.5H7" stroke="#3a5a7a" stroke-width="1.5"/><path d="M12 1V14M9 4H11M9 7H11M9 10H11" stroke="#8a9ab0" stroke-width=".8"/></svg>
<svg style="left:921px;top:77px" width="17" height="15" viewBox="0 0 17 15"><path d="M1 8L7 2.5V5.5H15.5V10.5H7V13.5Z" fill="#f8e8a0" stroke="#d8a020"/><path d="M2 0V5M0 1.5L4 3.5M0 3.5L4 1.5" stroke="#2a4a8a" stroke-width="1"/></svg>
<svg style="left:946px;top:77px" width="15" height="14" viewBox="0 0 15 14"><path d="M0.5 7L6.5 1.5V4.5H14.5V9.5H6.5V12.5Z" fill="#f8e8a0" stroke="#d8a020"/></svg>
<svg style="left:994px;top:77px" width="15" height="14" viewBox="0 0 15 14"><path d="M14.5 7L8.5 1.5V4.5H0.5V9.5H8.5V12.5Z" fill="#f4f4f8" stroke="#b8b8c0"/></svg>
<div class="a" style="left:1708px;top:70px;width:109px;height:29px;background:#fff;border:1px solid #9a9a9a"></div>
<div class="t" style="left:1712.00px;top:74.06px;font-size:18.0px;line-height:22px;color:#505060;font-family:'Liberation Sans',sans-serif;transform:scaleX(0.9264);transform-origin:0 0">Quick Access</div>
<svg style="left:1823px;top:73px" width="2" height="22" viewBox="0 0 2 22"><rect x="0" y="0" width="2" height="2" fill="#9aa0b0"/><rect x="0" y="4" width="2" height="2" fill="#9aa0b0"/><rect x="0" y="8" width="2" height="2" fill="#9aa0b0"/><rect x="0" y="12" width="2" height="2" fill="#9aa0b0"/><rect x="0" y="16" width="2" height="2" fill="#9aa0b0"/><rect x="0" y="20" width="2" height="2" fill="#9aa0b0"/></svg>
<div class="a" style="left:1828px;top:69px;width:1px;height:28px;background:#8a90a0"></div>
<svg style="left:1838px;top:77px" width="16" height="15" viewBox="0 0 16 15"><rect x="0.5" y="2.5" width="12" height="12" fill="#fbf4dc" stroke="#a89860"/><path d="M0.5 6.5H12.5M5.5 6.5V14.5" stroke="#5a7ab0"/><path d="M12 0L13 2.5L15.5 3.5L13 4.5L12 7L11 4.5L8.5 3.5L11 2.5Z" fill="#f8e070" stroke="#d8a830" stroke-width=".7"/></svg>
<div class="a" style="left:1860px;top:74px;width:1px;height:18px;background:#6a6f80"></div>
<svg style="left:1869px;top:76px" width="16" height="16" viewBox="0 0 16 16"><rect x="0.5" y="5.5" width="5" height="4" fill="#f4e4a8" stroke="#a08040"/><rect x="6.5" y="11.5" width="5" height="4" fill="#f4e4a8" stroke="#a08040"/><path d="M3 9.5V13.5H6.5" fill="none" stroke="#806030"/><ellipse cx="11" cy="4.5" rx="4.5" ry="4" fill="#b07030" stroke="#7a4a20"/><path d="M8 6L14 3" stroke="#f0d0a0"/></svg>
<div class="a" style="left:1889px;top:74px;width:23px;height:21px;background:#cde2f8;border:1px solid #99c4ee"></div>
<svg style="left:1893px;top:77px" width="16" height="16" viewBox="0 0 16 16"><ellipse cx="8" cy="8.5" rx="4" ry="5" fill="#8ac080" stroke="#3a7040"/><path d="M0.5 4L4.5 6M0.5 8.5H4M0.5 13L4.5 11.5M15.5 4L11.5 6M15.5 8.5H12M15.5 13L11.5 11.5M4.5 0.5L6.5 3.5M11.5 0.5L9.5 3.5" stroke="#2a5a40" stroke-width="1.2"/></svg>
<div class="a" style="left:0px;top:1020px;width:1920px;height:60px;background:#363133"></div>
<div class="a" style="left:0px;top:1020px;width:72px;height:60px;background:#352a31"></div>
<div class="a" style="left:72px;top:1020px;width:516px;height:60px;background:#f0f0f0;border-top:1px solid #b8b8b8"></div>
<svg style="left:24px;top:1038px" width="25" height="25" viewBox="0 0 25 25"><path d="M0 2.5L10 1.2V11H0Z M11.3 1L24.5 -0.3V11H11.3Z M0 12.3H10V22.3L0 21Z M11.3 12.3H24.5V24.5L11.3 22.5Z" fill="#fff"/></svg>
<svg style="left:85px;top:1033px" width="34" height="34" viewBox="0 0 34 34"><circle cx="17" cy="17" r="14.6" fill="none" stroke="#8a8a8a" stroke-width="4.8"/><circle cx="17" cy="17" r="14.6" fill="none" stroke="#000" stroke-width="3.4"/></svg>
<div class="t" style="left:132.03px;top:1038.85px;font-size:21.5px;line-height:26px;color:#3a3a3a;font-family:'Liberation Sans',sans-serif;transform:scaleX(0.9693);transform-origin:0 0">Digite aqui para pesquisar</div>
<svg style="left:549px;top:1038px" width="18" height="27" viewBox="0 0 18 27"><rect x="4.5" y="0.75" width="9" height="16" rx="4.5" fill="none" stroke="#222" stroke-width="1.6"/><path d="M1 11.5Q1 21 9 21Q17 21 17 11.5M9 21V25.5M4 25.5H14" fill="none" stroke="#222" stroke-width="1.6"/></svg>
<svg style="left:612px;top:1038px" width="25" height="25" viewBox="0 0 25 25"><path d="M0 1.5H16M0 4H16M0 21H16M0 23.5H16" stroke="#fff" stroke-width="1.3"/><path d="M1 1V4M15 1V4M1 21V24M15 21V24" stroke="#fff" stroke-width="1.3"/><rect x="1" y="7.5" width="14" height="10" fill="none" stroke="#fff" stroke-width="1.3"/><path d="M22 0V24" stroke="#fff" stroke-width="1.3"/><rect x="20.5" y="8" width="3" height="3" fill="#fff"/></svg>
<svg style="left:679px;top:1033px" width="31" height="33" viewBox="0 0 31 33"><path d="M2 14Q4 2 16 1Q29 1 30 15V19H9Q10 26 18 26Q24 26 28 23V30Q23 33 16 33Q3 32 3 19Q3 9 13 7Q8 10 9 14H21Q21 9 15.5 8.5Q6 8 2 14Z" fill="#1c7ad4"/></svg>
<svg style="left:737px;top:1036px" width="33" height="28" viewBox="0 0 33 28"><path d="M1 2Q1 0.5 2.5 0.5H12L14 2.5H31.5Q33 2.5 33 4V24.5Q33 26 31.5 26H2.5Q1 26 1 24.5Z" fill="#f8d775"/><rect x="1" y="5" width="32" height="21" rx="1.2" fill="#fde49a"/><rect x="3" y="2.2" width="7" height="1.6" fill="#f4f0c8"/><path d="M6 13.5H27V27.5H22V19H12V27.5H6Z" fill="#35a8e8"/><rect x="12" y="19" width="10" height="7" fill="#fde49a"/></svg>
<svg style="left:796px;top:1031px" width="35" height="36" viewBox="0 0 35 36"><path d="M11 10V6Q11 1 17.5 1Q24 1 24 6V10M13.5 10V6.5Q13.5 3 17.5 3Q21.5 3 21.5 6.5V10" fill="none" stroke="#fff" stroke-width="1.4"/><rect x="0" y="9.5" width="35" height="26" rx="1.5" fill="#fff"/><rect x="10.5" y="15" width="6.5" height="6.5" fill="#f25022"/><rect x="18" y="15" width="6.5" height="6.5" fill="#7fba00"/><rect x="10.5" y="22.5" width="6.5" height="6.5" fill="#00a4ef"/><rect x="18" y="22.5" width="6.5" height="6.5" fill="#ffb900"/></svg>
<svg style="left:856px;top:1033px" width="37" height="31" viewBox="0 0 37 31"><path d="M0 9.2L18 0.6L36.2 9.2V30H0Z" fill="#fff"/><path d="M1.5 10.3L35 10.3L21 17.5L28.5 24.5Z" fill="#2a2a2a"/></svg>
<svg style="left:916px;top:1032px" width="36" height="36" viewBox="0 0 36 36"><defs><linearGradient id="pg" x1="0" y1="1" x2="1" y2="0"><stop offset="0" stop-color="#189ec0"/><stop offset="1" stop-color="#22d4fa"/></linearGradient></defs><rect width="36" height="36" fill="url(#pg)"/><path d="M4.5 7.5L7.5 4.5L32 29L33 33L29 32Z" fill="#e8a050" stroke="#203040" stroke-width="1.2"/><path d="M4.5 7.5L7.5 4.5L10 7L7 10Z" fill="#f09a8a"/><path d="M8 8L31 31" stroke="#f8e0c0" stroke-width="1"/></svg>
<svg style="left:975px;top:1032px" width="36" height="36" viewBox="0 0 36 36"><rect width="36" height="36" rx="4" fill="#ef3b2f"/><path d="M6 18L13 11L20 18L13 25Z" fill="#fff"/><path d="M20 10L27 18L20 26L23 26L30 18L23 10Z" fill="#fff"/></svg>
<svg style="left:1035px;top:1033px" width="34" height="34" viewBox="0 0 34 34"><circle cx="17" cy="17" r="16.5" fill="#db4437"/><path d="M17 17L2.7 8.75A16.5 16.5 0 0 0 17 33.5Z" fill="#0f9d58"/><path d="M17 17L17 33.5A16.5 16.5 0 0 0 31.3 8.75Z" fill="#f4b400"/><path d="M17 9.5H31.3A16.5 16.5 0 0 0 2.7 8.75L10.5 21Z" fill="#db4437"/><circle cx="17" cy="17" r="7.2" fill="#fff"/><circle cx="17" cy="17" r="5.6" fill="#4285f4"/></svg>
<svg style="left:1092px;top:1031px" width="37" height="37" viewBox="0 0 37 37"><circle cx="18.5" cy="19" r="17" fill="#1a5ab8"/><circle cx="21" cy="17" r="13" fill="#3a8ae0"/><path d="M4 18L26 12L32 26L10 32Z" fill="#f0f0f8"/><path d="M5 18L18 24L30 14" fill="none" stroke="#b8c0d0" stroke-width="1"/></svg>
<svg style="left:1152px;top:1032px" width="36" height="36" viewBox="0 0 36 36"><circle cx="18" cy="18" r="17" fill="#00a9f0"/><path d="M25 11Q22 8 17.5 8Q11 8 11 13Q11 17 17 18.5Q23 19.5 23 22.5Q23 26 18 26Q13 26 10.5 23" fill="none" stroke="#fff" stroke-width="4.2"/></svg>
<div class="a" style="left:1201px;top:1020px;width:57px;height:60px;background:#5a5657"></div>
<svg style="left:1212px;top:1032px" width="34" height="34" viewBox="0 0 34 34"><circle cx="17" cy="17" r="14" fill="none" stroke="#b0b0b0" stroke-width="6" stroke-dasharray="4 3.3"/><circle cx="17" cy="17" r="12" fill="#3a3050" stroke="#aaa" stroke-width="2"/><text x="17" y="15" font-size="7" font-family="Liberation Sans" font-weight="bold" fill="#e09030" text-anchor="middle">Java FF</text><text x="17" y="23" font-size="7" font-family="Liberation Sans" font-weight="bold" fill="#e09030" text-anchor="middle">IDE</text></svg>
<svg style="left:1270px;top:1032px" width="36" height="36" viewBox="0 0 36 36"><rect width="36" height="36" rx="4" fill="#ef3b2f"/><path d="M6 18L13 11L20 18L13 25Z" fill="#fff"/><path d="M20 10L27 18L20 26L23 26L30 18L23 10Z" fill="#fff"/></svg>
<div class="a" style="left:731px;top:1077px;width:46px;height:3px;background:#e8b8a8"></div>
<div class="a" style="left:971px;top:1077px;width:45px;height:3px;background:#e8b8a8"></div>
<div class="a" style="left:1030px;top:1077px;width:45px;height:3px;background:#e8b8a8"></div>
<div class="a" style="left:1089px;top:1077px;width:45px;height:3px;background:#e8b8a8"></div>
<div class="a" style="left:1148px;top:1077px;width:45px;height:3px;background:#e8b8a8"></div>
<div class="a" style="left:1201px;top:1077px;width:57px;height:3px;background:#e8b8a8"></div>
<div class="a" style="left:1266px;top:1077px;width:45px;height:3px;background:#e8b8a8"></div>
<div class="a" style="left:763px;top:1077px;width:14px;height:3px;background:#a89088"></div>
<div class="a" style="left:1322px;top:1020px;width:26px;height:60px;background:#ececec"></div>
<svg style="left:1328px;top:1030px" width="14" height="8" viewBox="0 0 14 8"><path d="M1 7L7 1L13 7" fill="none" stroke="#333" stroke-width="1.8"/></svg>
<svg style="left:1328px;top:1062px" width="14" height="8" viewBox="0 0 14 8"><path d="M1 1L7 7L13 1" fill="none" stroke="#333" stroke-width="1.8"/></svg>
<svg style="left:1379px;top:1038px" width="23" height="24" viewBox="0 0 23 24"><circle cx="15" cy="6" r="4.5" fill="none" stroke="#fff" stroke-width="1.4"/><path d="M8.5 17Q9 10.5 15 10.5Q21 10.5 22 17" fill="none" stroke="#fff" stroke-width="1.4"/><circle cx="7" cy="13" r="4.5" fill="none" stroke="#fff" stroke-width="1.4"/><path d="M0.7 23.5Q1 17.5 7 17.5Q13 17.5 13.5 23.5" fill="none" stroke="#fff" stroke-width="1.4"/></svg>
<svg style="left:1441px;top:1045px" width="19" height="10" viewBox="0 0 19 10"><path d="M1 9L9.5 1L18 9" fill="none" stroke="#fff" stroke-width="1.3"/></svg>
<svg style="left:1486px;top:1042px" width="25" height="16" viewBox="0 0 25 16"><path d="M4 15Q0 15 0 11.5Q0 8 4 8Q5 2 11 2Q15 2 17 5Q19 4 21 5Q25 7 25 11Q25 15 21 15Z" fill="#d8d8d8"/><path d="M0 11.5Q0 15 4 15H21Q25 15 25 11Q20 9 12 12Q6 10 0 11.5Z" fill="#bdbdbd"/></svg>
<svg style="left:1535px;top:1044px" width="23" height="13" viewBox="0 0 23 13"><rect x="0.7" y="0.7" width="19.6" height="11.6" fill="none" stroke="#fff" stroke-width="1.3"/><rect x="3" y="3" width="6" height="7" fill="#fff"/><rect x="20.5" y="4" width="2" height="5" fill="#fff"/></svg>
<svg style="left:1582px;top:1039px" width="24" height="22" viewBox="0 0 24 22"><path d="M1 8H5L11 2V20L5 14H1Z" fill="none" stroke="#fff" stroke-width="1.3"/><path d="M14 8Q16 11 14 14M17 5Q21 11 17 17M20 2Q26 11 20 20" fill="none" stroke="#fff" stroke-width="1.3"/></svg>
<svg style="left:1632px;top:1041px" width="22" height="20" viewBox="0 0 22 20"><path d="M1 19Q2 6 20 2M5 19Q6 10 19 7M9 19Q10 13 18 12" fill="none" stroke="#fff" stroke-width="1.3"/><circle cx="17.5" cy="17.5" r="1.8" fill="#fff"/></svg>
<svg style="left:1679px;top:1040px" width="33" height="19" viewBox="0 0 33 19"><rect x="0.7" y="0.7" width="31.6" height="17.6" fill="none" stroke="#fff" stroke-width="1.3"/><path d="M4 5H29M4 9H29M4 13H29" stroke="#fff" stroke-width="1.1" stroke-dasharray="1.5 2.2"/><path d="M9 14H24" stroke="#fff" stroke-width="1.3"/></svg>
<div class="t" style="left:1761.57px;top:1026.09px;font-size:18.5px;line-height:22px;color:#fff;font-family:'Liberation Sans',sans-serif;transform:scaleX(0.9332);transform-origin:0 0">17:10</div>
<div class="t" style="left:1736.30px;top:1054.09px;font-size:18.5px;line-height:22px;color:#fff;font-family:'Liberation Sans',sans-serif;transform:scaleX(1.0119);transform-origin:0 0">25/06/2019</div>
<svg style="left:1857px;top:1037px" width="37" height="38" viewBox="0 0 37 38"><path d="M0.5 1.5H24.5V18H14L9 23V18H0.5Z" fill="#fff"/><path d="M4.5 6H20.5M4.5 9.5H20.5M4.5 13H18" stroke="#363133" stroke-width="1.3"/><circle cx="24.5" cy="24" r="12" fill="#363133"/><circle cx="24.5" cy="24" r="11.3" fill="none" stroke="#9a9a9a" stroke-width="1.1"/></svg>
<div class="t" style="left:1875.00px;top:1050.57px;font-size:20px;line-height:24px;color:#fff;font-family:'Liberation Sans',sans-serif">3</div>
<div class="a" style="left:1912px;top:1020px;width:1px;height:60px;background:#8a8a8a"></div>
</body></html>
